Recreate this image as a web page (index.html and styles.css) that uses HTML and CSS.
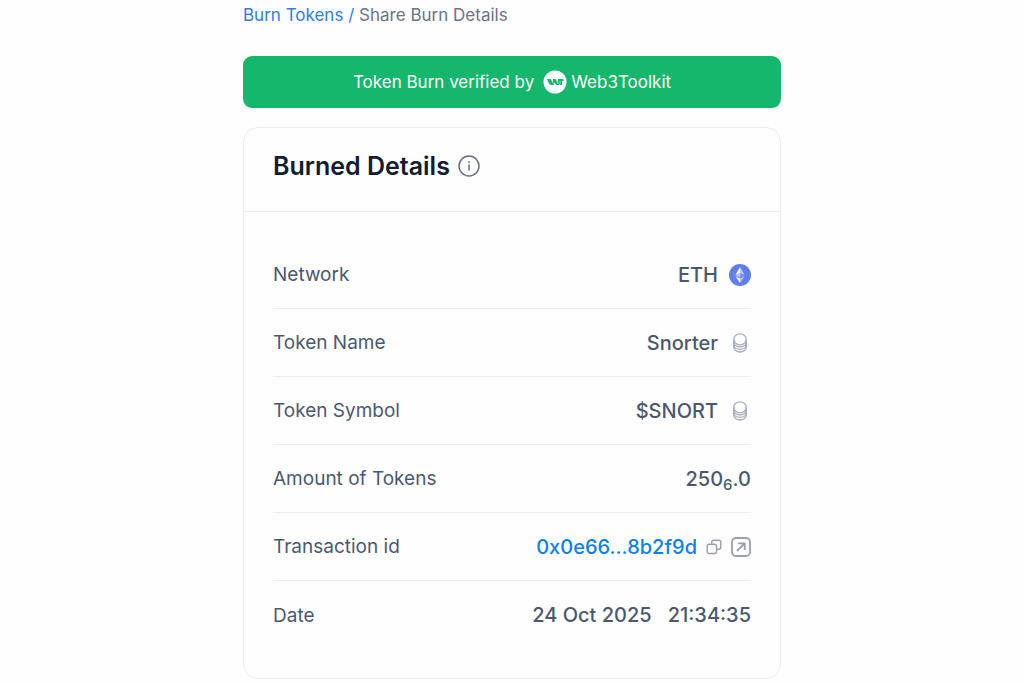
FILE: index.html
```html
<!DOCTYPE html>
<html lang="en">
<head>
  <meta charset="UTF-8" />
  <meta name="viewport" content="width=device-width, initial-scale=1.0" />
  <title>Share Burn Details</title>
  <link rel="stylesheet" href="styles.css">
</head>
<body>
  <main class="container">
    <nav class="breadcrumb" aria-label="Breadcrumb">
      <a href="#burn-tokens">Burn Tokens /</a>
      <span>Share Burn Details</span>
    </nav>

    <div class="banner">
      <span>Token Burn verified by</span>
      <a class="brand" href="#home">
        <svg class="brand-logo" viewBox="0 0 24 24" aria-hidden="true">
          <circle cx="12" cy="12" r="11.500" fill="#fff" />
          <path d="M4 9h4l2 3.500V9h3l2 3.500V9h5.500v2H19v4h-2l-1-1v1h-2.500L11 12.500V15H8.500C6 15 5 11.500 4 9z" fill="#14b76b" />
          <path d="M8 9l2.500 5M12.700 9l2.500 5M17 11v3" stroke="#fff" stroke-width="0.500" />
        </svg>
        <span>Web3Toolkit</span>
      </a>
    </div>

    <section class="card">
      <header class="card-header">
        <h1>Burned Details</h1>
        <button class="icon-button" type="button" aria-label="Info">
          <svg width="22" height="22" viewBox="0 0 22 22" fill="none" stroke="#667085" stroke-width="1.500">
            <circle cx="11" cy="11" r="10" />
            <path d="M11 9.500v6M11 6.300v1.700" />
          </svg>
        </button>
      </header>

      <dl class="details">
        <div class="row">
          <dt>Network</dt>
          <dd>
            <span>ETH</span>
            <svg width="22" height="22" viewBox="0 0 22 22" aria-hidden="true">
              <circle cx="11" cy="11" r="11" fill="#627eea" />
              <path d="M11 3v5.900l4.600 2.100z" fill="#c0cbf7" />
              <path d="M11 3l-4.600 8L11 8.900z" fill="#fff" />
              <path d="M11 8.900v4.800l4.600-2.700z" fill="#8197ee" />
              <path d="M11 8.900L6.400 11l4.600 2.700z" fill="#c0cbf7" />
              <path d="M11 14.700V19l4.600-6.900z" fill="#c0cbf7" />
              <path d="M11 14.700l-4.600-2.600L11 19z" fill="#fff" />
            </svg>
          </dd>
        </div>
        <div class="row">
          <dt>Token Name</dt>
          <dd>
            <span>Snorter</span>
            <svg width="22" height="22" viewBox="0 0 22 22" fill="none" stroke="#a6acba" stroke-width="1.300" aria-hidden="true">
              <ellipse cx="11" cy="7.300" rx="6.300" ry="5.500" />
              <path d="M4.700 7.300v7.700c0 2.900 2.800 5 6.300 5s6.300-2.100 6.300-5V7.300" />
              <path d="M4.700 9.500c0 3.200 2.800 5.400 6.300 5.400s6.300-2.200 6.300-5.400M4.700 12.500c0 2.900 2.800 4.900 6.300 4.900s6.300-2 6.300-4.900" />
            </svg>
          </dd>
        </div>
        <div class="row">
          <dt>Token Symbol</dt>
          <dd>
            <span>$SNORT</span>
            <svg width="22" height="22" viewBox="0 0 22 22" fill="none" stroke="#a6acba" stroke-width="1.300" aria-hidden="true">
              <ellipse cx="11" cy="7.300" rx="6.300" ry="5.500" />
              <path d="M4.700 7.300v7.700c0 2.900 2.800 5 6.300 5s6.300-2.100 6.300-5V7.300" />
              <path d="M4.700 9.500c0 3.200 2.800 5.400 6.300 5.400s6.300-2.200 6.300-5.400M4.700 12.500c0 2.900 2.800 4.900 6.300 4.900s6.300-2 6.300-4.900" />
            </svg>
          </dd>
        </div>
        <div class="row">
          <dt>Amount of Tokens</dt>
          <dd><span>250<sub>6</sub>.0</span></dd>
        </div>
        <div class="row">
          <dt>Transaction id</dt>
          <dd class="transaction">
            <a href="#transaction">0x0e66...8b2f9d</a>
            <button class="icon-button" type="button" aria-label="Copy transaction id">
              <svg width="16" height="16" viewBox="0 0 16 16" fill="none" stroke="#98a0b0" stroke-width="1.400">
                <rect x="1.200" y="5.200" width="9.300" height="9.300" rx="2" />
                <path d="M5.700 5V3.200c0-1.100.9-2 2-2h5.100c1.100 0 2 .9 2 2v5.100c0 1.100-.9 2-2 2H11" />
              </svg>
            </button>
            <a class="external" href="#explorer" aria-label="Open in explorer">
              <svg width="20" height="20" viewBox="0 0 20 20" fill="none" stroke="#98a0b0" stroke-width="1.800">
                <rect x="1" y="1" width="18" height="18" rx="4" />
                <path d="M6 14l7.500-7.500M7 6.300h6.700V13" />
              </svg>
            </a>
          </dd>
        </div>
        <div class="row">
          <dt>Date</dt>
          <dd class="date"><span>24 Oct 2025</span><span>21:34:35</span></dd>
        </div>
      </dl>
    </section>
  </main>
</body>
</html>
```

FILE: styles.css
```css
* {
  box-sizing: border-box;
}

body {
  font-family: Inter, "Liberation Sans", sans-serif;
  background-color: #fefefe;
  color: #4c596d;
  margin: 0;
}

a {
  color: #0c80ea;
  text-decoration: none;
}

.container {
  max-width: 538px;
  margin: auto;
  padding: 4px 0;
}

.breadcrumb {
  color: #6b7485;
  font-size: 17px;
  line-height: 22px;
  margin-bottom: 30px;
}

.breadcrumb a {
  color: #2b7df0;
}

.banner {
  display: flex;
  align-items: center;
  justify-content: center;
  gap: 9px;
  background-color: #14b76b;
  color: white;
  border-radius: 9px;
  min-height: 52px;
  margin-bottom: 19px;
  font-size: 17px;
}

.brand {
  display: flex;
  align-items: center;
  gap: 4px;
  color: white;
}

.brand-logo {
  width: 24px;
  height: 24px;
}

.card {
  border: 1px solid #ededf0;
  border-radius: 15px;
}

.card-header {
  display: flex;
  align-items: center;
  gap: 8px;
  padding: 22px 29px 29px;
  border-bottom: 1px solid #ededf0;
}

h1 {
  color: #141c2e;
  font-size: 25px;
  font-weight: 600;
  line-height: 32px;
  margin: 0;
}

.icon-button {
  display: flex;
  background: none;
  border: none;
  padding: 0;
  cursor: pointer;
}

.details {
  margin: 0;
  padding: 29px;
}

.row {
  display: flex;
  align-items: center;
  justify-content: space-between;
  min-height: 68px;
  border-bottom: 1px solid #ededf0;
  font-size: 19px;
}

.row:last-child {
  border-bottom: none;
}

dd {
  display: flex;
  align-items: center;
  gap: 11px;
  margin: 0;
  font-size: 20px;
  font-weight: 550;
  line-height: 22px;
}

sub {
  font-size: 15px;
  line-height: 0;
  vertical-align: -4px;
}

.transaction {
  gap: 9px;
}

.external {
  display: flex;
}

.date {
  gap: 16px;
}
```
